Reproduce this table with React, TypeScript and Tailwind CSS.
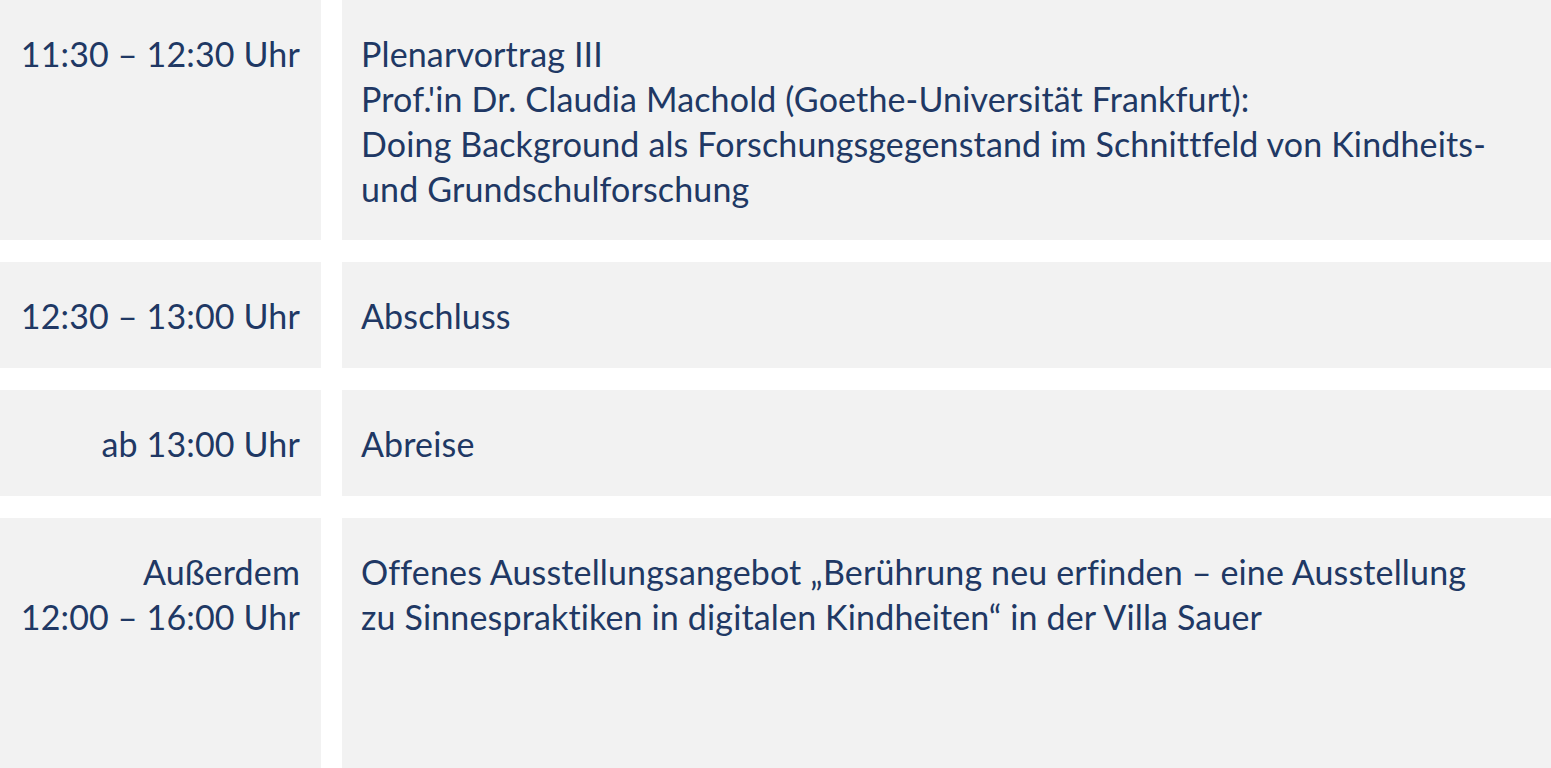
import React from "react";

const Row = ({ time, children, h }: { time: React.ReactNode; children: React.ReactNode; h: string }) => (
  <div className={`grid grid-cols-[321px_1fr] gap-[21px] ${h}`}>
    <div className="bg-[#f2f2f2] pt-[31px] pr-[21px] text-right whitespace-nowrap">{time}</div>
    <div className="bg-[#f2f2f2] pt-[31px] pl-[19px] whitespace-nowrap">{children}</div>
  </div>
);

export default function App() {
  return (
    <div
      className="w-[1551px] h-[768px] overflow-hidden bg-white flex flex-col gap-[22px] text-[#203864] text-[34px] leading-[45px] tracking-[0.15px] [font-variant-ligatures:none]"
      style={{ fontFamily: "Lato, 'Open Sans', sans-serif" }}
    >
      <Row h="h-[240px]" time="11:30 – 12:30 Uhr">
        Plenarvortrag III
        <br />
        Prof.'in Dr. Claudia Machold (Goethe-Universität Frankfurt):
        <br />
        Doing Background als Forschungsgegenstand im Schnittfeld von Kindheits-
        <br />
        und Grundschulforschung
      </Row>
      <Row h="h-[106px]" time="12:30 – 13:00 Uhr">
        Abschluss
      </Row>
      <Row h="h-[106px]" time="ab 13:00 Uhr">
        Abreise
      </Row>
      <Row
        h="h-[250px]"
        time={
          <>
            Außerdem
            <br />
            12:00 – 16:00 Uhr
          </>
        }
      >
        Offenes Ausstellungsangebot „Berührung neu erfinden – eine Ausstellung
        <br />
        zu Sinnespraktiken in digitalen Kindheiten“ in der Villa Sauer
      </Row>
    </div>
  );
}
